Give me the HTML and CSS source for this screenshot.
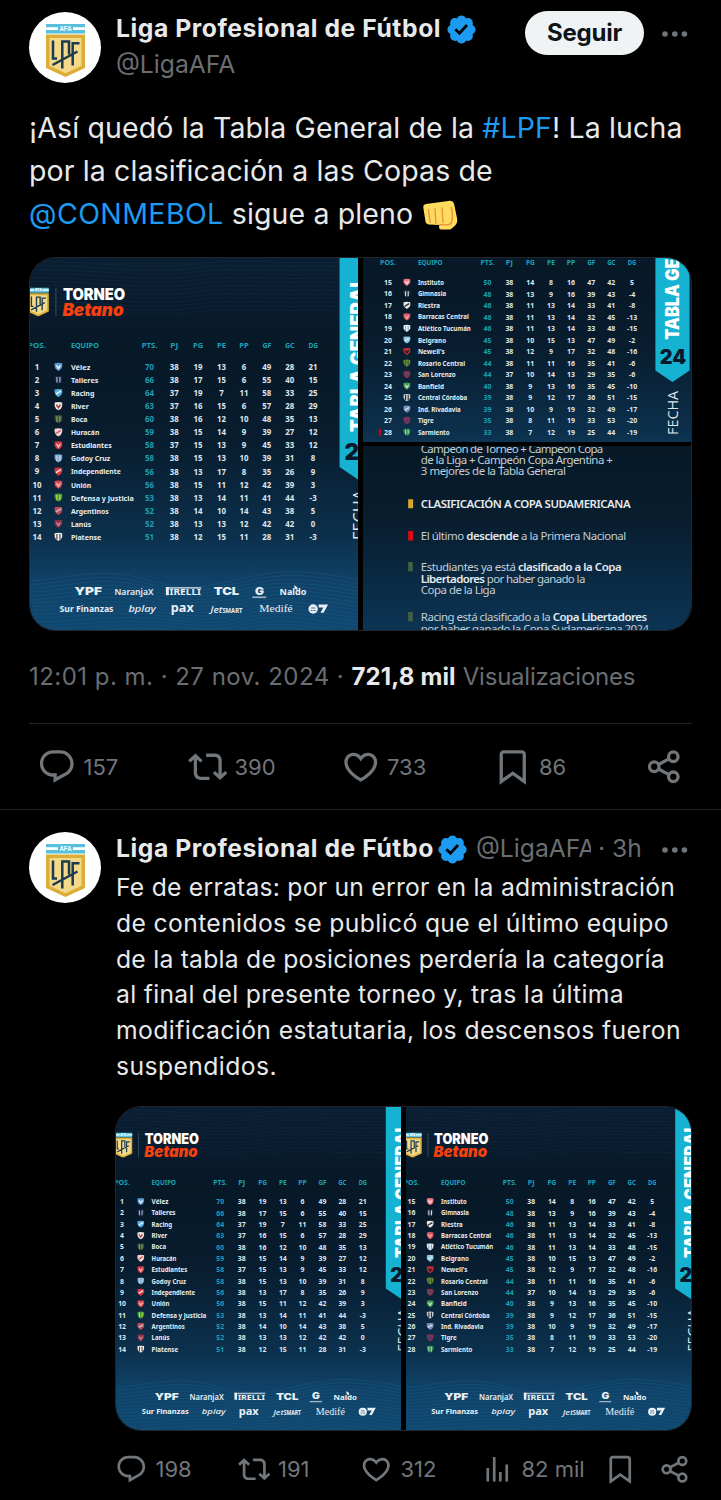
FILE: index.html
```html
<!DOCTYPE html>
<html lang="es">
<head>
<meta charset="utf-8">
<title>Liga Profesional de Fútbol</title>
<link rel="stylesheet" href="styles.css">
</head>
<body>
<svg class="defs" aria-hidden="true">
  <defs>
    <symbol id="i-reply" viewBox="0 0 24 24"><path d="M1.751 10c0-4.42 3.584-8 8.005-8h4.366c4.49 0 8.129 3.64 8.129 8.13 0 2.96-1.607 5.68-4.196 7.11l-8.054 4.46v-3.69h-.067c-4.49.1-8.183-3.51-8.183-8.01zm8.005-6c-3.317 0-6.005 2.69-6.005 6 0 3.37 2.77 6.08 6.138 6.01l.351-.01h1.761v2.3l5.087-2.81c1.951-1.08 3.163-3.13 3.163-5.36 0-3.39-2.744-6.13-6.129-6.13H9.756z"/></symbol>
    <symbol id="i-repost" viewBox="0 0 24 24"><path d="M4.5 3.88l4.432 4.14-1.364 1.46L5.5 7.55V16c0 1.1.896 2 2 2H13v2H7.5c-2.209 0-4-1.79-4-4V7.55L1.432 9.48.068 8.02 4.5 3.88zM16.5 6H11V4h5.5c2.209 0 4 1.79 4 4v8.45l2.068-1.93 1.364 1.46-4.432 4.14-4.432-4.14 1.364-1.46 2.068 1.93V8c0-1.1-.896-2-2-2z"/></symbol>
    <symbol id="i-like" viewBox="0 0 24 24"><path d="M16.697 5.5c-1.222-.06-2.679.51-3.89 2.16l-.805 1.09-.806-1.09C9.984 6.01 8.526 5.44 7.304 5.5c-1.243.07-2.349.78-2.91 1.91-.552 1.12-.633 2.78.479 4.82 1.074 1.97 3.257 4.27 7.129 6.61 3.87-2.34 6.052-4.64 7.126-6.61 1.111-2.04 1.03-3.7.477-4.82-.561-1.13-1.666-1.84-2.908-1.91zm4.187 7.69c-1.351 2.48-4.001 5.12-8.379 7.67l-.503.3-.504-.3c-4.379-2.55-7.029-5.19-8.382-7.67-1.36-2.5-1.41-4.86-.514-6.67.887-1.79 2.647-2.91 4.601-3.01 1.651-.09 3.368.56 4.798 2.01 1.429-1.45 3.146-2.1 4.796-2.01 1.954.1 3.714 1.22 4.601 3.01.896 1.81.846 4.17-.514 6.67z"/></symbol>
    <symbol id="i-save" viewBox="0 0 24 24"><path d="M4 4.5C4 3.12 5.119 2 6.5 2h11C18.881 2 20 3.12 20 4.5v18.44l-8-5.71-8 5.71V4.5zM6.5 4c-.276 0-.5.22-.5.5v14.56l6-4.29 6 4.29V4.5c0-.28-.224-.5-.5-.5h-11z"/></symbol>
    <symbol id="i-views" viewBox="0 0 24 24"><path d="M8.75 21V3h2v18h-2zM18 21V8.5h2V21h-2zM4 21l.004-10h2L6 21H4zm9.248 0v-7h2v7h-2z"/></symbol>
    <symbol id="i-share" viewBox="0 0 24 24"><g fill="none" stroke="currentColor" stroke-width="2"><circle cx="5.6" cy="12" r="2.9"/><circle cx="17.2" cy="5.9" r="2.9"/><circle cx="17.2" cy="18.1" r="2.9"/><path d="M8.2 10.6l6.4-3.4M8.2 13.4l6.4 3.4"/></g></symbol>
    <symbol id="i-more" viewBox="0 0 28 8"><circle cx="4" cy="4" r="2.8"/><circle cx="13.8" cy="4" r="2.8"/><circle cx="23.4" cy="4" r="2.8"/></symbol>
    <symbol id="i-verified" viewBox="0 0 24 24"><path d="M22.25 12c0-1.43-.88-2.67-2.19-3.34.46-1.39.2-2.9-.81-3.91s-2.52-1.27-3.91-.81c-.66-1.31-1.91-2.19-3.34-2.19s-2.67.88-3.33 2.19c-1.4-.46-2.91-.2-3.92.81s-1.26 2.52-.8 3.91c-1.31.67-2.2 1.91-2.2 3.34s.89 2.67 2.2 3.34c-.46 1.39-.21 2.9.8 3.91s2.52 1.26 3.91.81c.67 1.31 1.91 2.19 3.34 2.19s2.68-.88 3.34-2.19c1.39.45 2.9.2 3.91-.81s1.27-2.52.81-3.91c1.31-.67 2.19-1.91 2.19-3.34zm-11.71 4.2L6.8 12.46l1.41-1.42 2.26 2.26 4.8-5.23 1.47 1.36-6.2 6.77z"/></symbol>
    <symbol id="i-fist" viewBox="0 0 36 30">
      <path fill="#ffdb5e" d="M1.3 7.6C1 5.7 2 4.400 3.900 4.100L26.500.9c2.800-.4 4.900.500 5.600 3l3 14.600c.5 3.300-.3 5.500-2.200 7.200l-3.200 2.900c-.7.600-1.300.800-2.200.800H19.300c-1.600 0-2.300-1-2.200-2.500l.1-1.900-10.500-.6c-1.700-.1-2.800-1-3.200-2.800z"/>
      <path fill="none" stroke="#ee9547" stroke-width="1.500" stroke-linecap="round" d="M6.500 9.500l1.600 12.800M13 8.500l.9 15M20 8l1 14.500M29.300 7.500c1.400 4.800 1.500 9.500.3 14.500-.5 2-1.800 2.700-3.600 2.700H17.500"/>
    </symbol>
    <symbol id="i-lpf" viewBox="0 0 39 53">
      <path fill="#58c0dc" d="M0 0h39v9.500H0z"/>
      <path fill="#fff" d="M0 3.300h12v2.600H0zM27 3.300h12v2.600H27z"/>
      <text x="13.500" y="6.900" class="afa" textLength="12" lengthAdjust="spacingAndGlyphs">AFA</text>
      <path fill="#dcae38" d="M0 10.500h39V44L19.500 53 0 44z"/>
      <path fill="#f4d98a" d="M3.500 14h32v27.800l-16 7.400-16-7.400z"/>
      <path fill="none" stroke="#1b3c50" stroke-width="2.500" d="M7 16.500V34.500h4M16.300 44.500V17.500h6.700v13M6.500 41L31.500 27.500M33.500 19.300h-6.800V41.500"/>
    </symbol>
    <linearGradient id="g-board" x1="0" y1="0" x2="0" y2="1">
      <stop offset="0" stop-color="#0b1f33"/><stop offset=".25" stop-color="#071827"/><stop offset=".5" stop-color="#081d2f"/><stop offset=".75" stop-color="#0c304c"/><stop offset=".87" stop-color="#0f4268"/><stop offset="1" stop-color="#104870"/>
    </linearGradient>
    <linearGradient id="g-notes" x1="0" y1="0" x2="0" y2="1">
      <stop offset="0" stop-color="#071927"/><stop offset=".4" stop-color="#081d2e"/><stop offset="1" stop-color="#0c3454"/>
    </linearGradient>
  </defs>
</svg>

<main class="thread">
  <article class="post">
    <header class="head">
      <span class="avatar"><svg><use href="#i-lpf"/></svg></span>
      <div class="who">
        <div class="who-line"><span class="name">Liga Profesional de Fútbol</span><svg class="verified"><use href="#i-verified"/></svg></div>
        <div class="handle">@LigaAFA</div>
      </div>
      <button class="follow">Seguir</button>
      <svg class="more"><use href="#i-more"/></svg>
    </header>
    <p class="text">¡Así quedó la Tabla General de la <a>#LPF</a>! La lucha<br>por la clasificación a las Copas de<br><a class="mention">@CONMEBOL</a> sigue a pleno <svg class="emoji"><use href="#i-fist"/></svg></p>
    <div class="media media-three">
      <svg class="panel tall" data-board="0" viewBox="0 0 329 372" preserveAspectRatio="none"></svg>
      <svg class="panel" data-board="1" data-mark="1" viewBox="-21.3 81.3 372.200 208.700" preserveAspectRatio="none"></svg>
      <svg class="panel" viewBox="0 0 329 184" preserveAspectRatio="none">
        <rect width="329" height="184" fill="url(#g-notes)"/>
        <g class="notes">
          <text x="58" y="6.700" textLength="183">Campeón de Torneo + Campeón Copa</text>
          <text x="58" y="18.200" textLength="192.500">de la Liga + Campeón Copa Argentina +</text>
          <text x="58" y="29.500" textLength="145.500">3 mejores de la Tabla General</text>
          <text x="58" y="62.300" textLength="210.500" class="strong">CLASIFICACIÓN A COPA SUDAMERICANA</text>
          <text x="58" y="94" textLength="206">El último <tspan class="strong">desciende</tspan> a la Primera Nacional</text>
          <text x="58" y="125.500" textLength="201.500">Estudiantes ya está <tspan class="strong">clasificado a la Copa</tspan></text>
          <text x="58" y="137.200" textLength="165"><tspan class="strong">Libertadores</tspan> por haber ganado la</text>
          <text x="58" y="148.500" textLength="75">Copa de la Liga</text>
          <text x="58" y="175.500" textLength="227">Racing está clasificado a la <tspan class="strong">Copa Libertadores</tspan></text>
          <text x="58" y="187" textLength="229">por haber ganado la Copa Sudamericana 2024</text>
        </g>
        <path fill="#d8a62c" d="M45.300 53.300h5v9h-5z"/>
        <path fill="#dc0d12" d="M45.300 85h5v9.500h-5z"/>
        <path fill="#456042" d="M45.300 116h4.600v9.300h-4.600zM45.300 166h4.600v9.300h-4.600z"/>
      </svg>
    </div>
    <div class="meta"><span class="when">12:01 p. m. · 27 nov. 2024 · </span><b>721,8 mil</b><span class="label">Visualizaciones</span></div>
    <div class="actions actions-main">
      <span class="action"><svg><use href="#i-reply"/></svg>157</span>
      <span class="action"><svg><use href="#i-repost"/></svg>390</span>
      <span class="action"><svg><use href="#i-like"/></svg>733</span>
      <span class="action"><svg><use href="#i-save"/></svg>86</span>
      <span class="action"><svg><use href="#i-share"/></svg></span>
    </div>
  </article>

  <article class="post reply">
    <span class="avatar"><svg><use href="#i-lpf"/></svg></span>
    <div class="body">
      <header class="reply-head">
        <span class="name">Liga Profesional de Fútbol</span><svg class="verified"><use href="#i-verified"/></svg><span class="handle">@LigaAFA</span><span class="ago">· 3h</span>
        <svg class="more"><use href="#i-more"/></svg>
      </header>
      <p class="reply-text"><span class="l1">Fe de erratas: por un error en la administración</span><br><span class="l2">de contenidos se publicó que el último equipo</span><br><span class="l1">de la tabla de posiciones perdería la categoría</span><br><span class="l3">al final del presente torneo y, tras la última</span><br><span class="l4">modificación estatutaria, los descensos fueron</span><br><span class="l4">suspendidos.</span></p>
      <div class="media media-two">
        <svg class="panel" data-board="0" viewBox="0 0 328 372" preserveAspectRatio="none"></svg>
        <svg class="panel" data-board="1" viewBox=".7 0 328 372" preserveAspectRatio="none"></svg>
      </div>
      <div class="actions actions-reply">
        <span class="action"><svg><use href="#i-reply"/></svg>198</span>
        <span class="action"><svg><use href="#i-repost"/></svg>191</span>
        <span class="action"><svg><use href="#i-like"/></svg>312</span>
        <span class="action"><svg><use href="#i-views"/></svg>82 mil</span>
        <span class="action"><svg><use href="#i-save"/></svg></span>
        <span class="action"><svg><use href="#i-share"/></svg></span>
      </div>
    </div>
  </article>
</main>
<script src="boards.js"></script>
</body>
</html>
```
FILE: styles.css
```css
* { box-sizing: border-box; }
body {
  margin: 0;
  background: #000;
  color: #e7e9ea;
  font-family: Inter, "Liberation Sans", sans-serif;
}
svg { display: block; flex: none; fill: currentColor; }
.defs { position: absolute; width: 0; height: 0; }
.thread { width: 721px; height: 1500px; overflow: hidden; }
.post { padding: 10px 29px 0; }

/* Account row */
.head { display: flex; height: 96px; }
.avatar {
  flex: none;
  display: flex;
  justify-content: center;
  width: 72px;
  height: 71px;
  padding-top: 12px;
  border-radius: 50%;
  background: #fff;
}
.head .avatar { margin-top: 2px; }
.avatar svg { width: 39px; height: 53px; }
.afa { font: 700 7px "Liberation Sans", sans-serif; fill: #fff; }
.who { margin-left: 15px; width: 409px; }
.who-line { display: flex; align-items: center; height: 36px; }
.name { font-size: 24.7px; font-weight: 700; line-height: 36px; letter-spacing: .56px; white-space: nowrap; }
.verified { width: 33px; height: 33px; margin: 2px 0 0 4px; color: #1d9bf0; }
.handle { font-size: 24.7px; line-height: 36px; color: #6a6e72; white-space: nowrap; }
.follow {
  width: 119px;
  height: 44px;
  margin-top: 1px;
  padding: 0;
  border: 0;
  border-radius: 22px;
  background: #eff3f4;
  color: #0f1419;
  font: 700 24px/42px Inter, sans-serif;
  letter-spacing: -.23px;
}
.more { width: 28px; height: 8px; color: #71767b; }
.head .more { margin: 20px 0 0 17px; }

/* Main post text */
.text { margin: 0; font-size: 28.5px; line-height: 43px; letter-spacing: .13px; white-space: nowrap; }
.text a { color: #1d9bf0; }
.text .mention { letter-spacing: .4px; }
.emoji { display: inline-block; width: 36px; height: 30px; margin-left: 1px; vertical-align: -6px; }

/* Media grids */
.media { display: grid; overflow: hidden; border: 1px solid #20262c; background: #000; }
.panel { width: 100%; height: 100%; }
.media-three {
  width: 663px;
  height: 374px;
  margin-top: 22px;
  border-radius: 26px;
  grid-template: 184px 184px / 328px 328px;
  gap: 4px 5px;
}
.tall { grid-row: 1 / 3; }
.media-two {
  width: 577px;
  height: 325px;
  margin-top: 21px;
  border-radius: 26px;
  grid-template: 323px / 285px 285px;
  gap: 5px;
}

/* Date and views */
.meta {
  height: 62px;
  margin-top: 31px;
  border-bottom: 1px solid #222629;
  font-size: 24px;
  line-height: 30px;
  color: #6a6e72;
  white-space: pre;
}
.when { letter-spacing: .47px; }
.meta b { color: #e7e9ea; letter-spacing: .15px; }
.label { margin-left: 7px; letter-spacing: -.22px; }

/* Action bars */
.actions { display: grid; align-items: center; font-size: 22px; color: #71767b; }
.action { display: flex; align-items: center; white-space: nowrap; letter-spacing: 0; }
.actions-main { height: 85px; padding-left: 8px; grid-template-columns: 151px 152.500px 152px 152px 40px; }
.actions-main svg { width: 39.500px; height: 39.500px; margin-right: 7px; }
.actions-reply { width: 590px; height: 76px; grid-template-columns: 122.500px 122.500px 121px 123px 55px 40px; }
.actions-reply svg { width: 32.500px; height: 32.500px; margin-right: 8px; }

/* Second post */
.reply { display: flex; margin: 0 -1px; padding: 20px 30px 0; border-top: 1px solid #222629; }
.reply .avatar { margin-top: 2px; }
.body { margin-left: 14px; }
.reply-head { display: flex; align-items: center; height: 36px; margin-bottom: 4px; }
.reply-head .name { width: 317px; margin-left: 1px; overflow: hidden; }
.reply-head .verified { margin-left: 3px; }
.reply-head .handle { width: 115px; margin-left: 7px; overflow: hidden; }
.reply-head .ago { width: 60px; margin-left: 7px; font-size: 24.7px; color: #6a6e72; }
.reply-head .more { margin-left: 3px; margin-top: 3px; }
.reply-text { margin: 0 0 0 1px; font-size: 24.7px; line-height: 35.800px; white-space: nowrap; }
.l1 { letter-spacing: .24px; }
.l2 { letter-spacing: .37px; }
.l3 { letter-spacing: .31px; }
.l4 { letter-spacing: .42px; }

/* Standings boards */
.panel text { font-family: "Noto Sans", "Open Sans", sans-serif; }
.panel .col { font-size: 7px; font-weight: 700; fill: #1ba3ba; text-anchor: middle; }
.panel .team { font-size: 7.500px; font-weight: 700; fill: #e6edf2; }
.panel .num { font-size: 7.900px; font-weight: 700; fill: #dfe7ec; text-anchor: middle; }
.panel .pts { fill: #1c9fb6; }
.panel .torneo { font: 900 16px Inter, sans-serif; fill: #fff; }
.panel .betano { font: italic 900 17.500px Inter, sans-serif; fill: #f5400f; }
.panel .title { font: 900 21px Inter, sans-serif; fill: #fff; }
.panel .round { font: 900 22.500px Inter, sans-serif; fill: #07192a; text-anchor: middle; }
.panel .fecha { font: 400 17px "Open Sans", sans-serif; fill: #dfe6ea; }
.panel .ad { font-size: 9px; font-weight: 700; fill: #e9f0f5; }
.panel .wide { font: 900 10.500px Inter, sans-serif; }
.panel .light { font-size: 9.500px; font-weight: 600; }
.panel .slant { font-style: italic; font-weight: 500; }
.panel .serif { font: 400 11px "Liberation Serif", serif; }
.panel .small { font-size: 7px; }
.panel .large { font-size: 13px; }
.panel .notes text { font-size: 11.500px; fill: #c3ced6; }
.panel .notes .strong { font-weight: 600; fill: #e4eaee; }
```
FILE: boards.js
```js
// Each team: name, drawn width, crest colours, then PTS PJ PG PE PP GF GC DG.
const boards = [
  { first: 1, teams: [
    ["Vélez", 19.5, "#5b9bd0", "#e8f1f8", [70, 38, 19, 13, 6, 49, 28, 21]],
    ["Talleres", 27.5, "#1c2a48", "#aab4c8", [66, 38, 17, 15, 6, 55, 40, 15]],
    ["Racing", 23.5, "#4fb1e6", "#f2f8fc", [64, 37, 19, 7, 11, 58, 33, 25]],
    ["River", 18, "#e9e4e4", "#b8343c", [63, 37, 16, 15, 6, 57, 28, 29]],
    ["Boca", 16.5, "#34533f", "#9a9a50", [60, 38, 16, 12, 10, 48, 35, 13]],
    ["Huracán", 28.5, "#f3d6d8", "#d4606a", [59, 38, 15, 14, 9, 39, 27, 12]],
    ["Estudiantes", 41, "#d43a44", "#f5c3c5", [58, 37, 15, 13, 9, 45, 33, 12]],
    ["Godoy Cruz", 39.5, "#7aa6d0", "#c5d9ea", [58, 38, 15, 13, 10, 39, 31, 8]],
    ["Independiente", 50, "#d93540", "#f3e9e9", [56, 38, 13, 17, 8, 35, 26, 9]],
    ["Unión", 20.5, "#d94a54", "#f3b8bb", [56, 38, 15, 11, 12, 42, 39, 3]],
    ["Defensa y Justicia", 63, "#3f9a3c", "#d8d534", [53, 38, 13, 14, 11, 41, 44, -3]],
    ["Argentinos", 38, "#c04a58", "#b9bccb", [52, 38, 14, 10, 14, 43, 38, 5]],
    ["Lanús", 20.5, "#8a2f48", "#c98a98", [52, 38, 13, 13, 12, 42, 42, 0]],
    ["Platense", 30.5, "#f0efec", "#59453c", [51, 38, 12, 15, 11, 28, 31, -3]]
  ] },
  { first: 15, teams: [
    ["Instituto", 29.5, "#f0787e", "#f9dada", [50, 38, 14, 8, 16, 47, 42, 5]],
    ["Gimnasia", 32, "#26323f", "#d9dfe3", [48, 38, 13, 9, 16, 39, 43, -4]],
    ["Riestra", 25, "#e8eaea", "#2b3036", [46, 38, 11, 13, 14, 33, 41, -8]],
    ["Barracas Central", 57.7, "#dd5a62", "#f4a9ab", [46, 38, 11, 13, 14, 32, 45, -13]],
    ["Atlético Tucumán", 60, "#e8f1f8", "#6faedb", [46, 38, 11, 13, 14, 33, 48, -15]],
    ["Belgrano", 32, "#8fc8e0", "#cfe8f1", [45, 38, 10, 15, 13, 47, 49, -2]],
    ["Newell's", 30.5, "#c62f38", "#161b22", [45, 38, 12, 9, 17, 32, 48, -16]],
    ["Rosario Central", 53.5, "#6d8a30", "#2a5a48", [44, 38, 11, 11, 16, 35, 41, -6]],
    ["San Lorenzo", 43, "#8c3048", "#3c5480", [44, 37, 10, 14, 13, 29, 35, -6]],
    ["Banfield", 29.5, "#3f9a54", "#cfe6c8", [40, 38, 9, 13, 16, 35, 45, -10]],
    ["Central Córdoba", 56, "#c9cdd2", "#24282e", [39, 38, 9, 12, 17, 36, 51, -15]],
    ["Ind. Rivadavia", 48.6, "#7d90bd", "#d3dcec", [39, 38, 10, 9, 19, 32, 49, -17]],
    ["Tigre", 18, "#8a3150", "#33427c", [35, 38, 8, 11, 19, 33, 53, -20]],
    ["Sarmiento", 36, "#2f8c50", "#a6d5b0", [33, 38, 7, 12, 19, 25, 44, -19]]
  ] }
];

const columns = [["POS.", 7, 18], ["EQUIPO", 55, 28], ["PTS.", 120, 16], ["PJ", 144.8, 8], ["PG", 168.6, 10],
  ["PE", 192, 9], ["PP", 214.6, 9.5], ["GF", 237.6, 9], ["GC", 260.5, 9.5], ["DG", 284, 9.5]];

function stretched(cls, x, y, width, text, extra = "") {
  return `<text class="${cls}" x="${x}" y="${y}" textLength="${width}" lengthAdjust="spacingAndGlyphs" ${extra}>${text}</text>`;
}

// Soft contour lines, densest near the foot of the board.
function waves() {
  let out = "";
  for (let i = 0; i < 17; i++) {
    const y = 322 + i * 3.6;
    const a = Math.max(10 - i * 0.7, 1);
    out += `<path d="M-22 ${y}C20 ${y + 6} 60 ${y - a * 1.6} 110 ${y - 2}S170 ${y + 8} 215 ${y - 2}S280 ${y - a} 351 ${y + 4}" stroke="#3d86b4" stroke-opacity="${0.3 - i * 0.008}" stroke-width=".6"/>`;
  }
  for (let i = 0; i < 13; i++) {
    const y = 4 + i * 4;
    out += `<path d="M-22 ${y}C60 ${y - 3} 110 ${y + 9} 165 ${y + 2}S260 ${y + 5} 351 ${y - 2}" stroke="#2a5c86" stroke-opacity=".22" stroke-width=".6"/>`;
  }
  return `<g fill="none">${out}</g>`;
}

function crest(y, base, accent, i) {
  const detail = i % 3 === 0 ? `<path d="M26.500 ${y - 1.500}l2 3 2-3" fill="none" stroke="${accent}" stroke-width="1.400"/>`
    : i % 3 === 1 ? `<path d="M27 ${y - 3}v5.500M30 ${y - 3}v5.500" stroke="${accent}" stroke-width="1.200"/>`
    : `<path d="M26 ${y + 1}l5-3" stroke="${accent}" stroke-width="1.600"/>`;
  return `<path d="M24.700 ${y - 3.700}q3.800-1 7.600 0v3.400q-.5 2.900-3.800 4.300q-3.300-1.400-3.800-4.300z" fill="${base}"/>${detail}`;
}

function sponsors() {
  return stretched("ad wide", 44.7, 337.3, 27.5, "YPF")
    + stretched("ad light", 84.7, 337, 39.3, "NaranjaX")
    + `<path d="M136.300 329h35.500v1.800h-35.500z" fill="#a9bccb"/><path d="M136.300 329h3v8.200h-3z" fill="#e9f0f5"/>`
    + stretched("ad", 140, 337.2, 31.5, "IRELLI")
    + stretched("ad wide", 184.3, 337.2, 25.5, "TCL")
    + stretched("ad wide", 225.7, 336.7, 9, "G") + `<path d="M223 338.500h14v1.600h-14z" fill="#9fb4c4"/>`
    + stretched("ad", 250.3, 337.3, 27, "Naldo") + `<path d="M265 327l3 2.200.5 3-3-1.500z" fill="#e9f0f5"/>`
    + stretched("ad", 29.7, 354, 54, "Sur Finanzas")
    + stretched("ad slant", 98.7, 354, 27.5, "bplay")
    + stretched("ad large", 141.3, 354.3, 23, "pax")
    + stretched("ad slant", 181, 354.8, 12, "Jet") + stretched("ad small", 193, 354.8, 20, "SMART")
    + stretched("ad serif", 230, 354.5, 33.5, "Medifé")
    + `<circle cx="284" cy="351" r="4.700" fill="#e9f0f5"/><path d="M281.500 352.500h2M282 350h4M284.500 352.500h2" stroke="#14456a" stroke-width=".8"/><path d="M289.500 346.500h9.500l-4.500 8.300h-3.200l3-5.400h-4.800z" fill="#e9f0f5"/>`;
}

function drawBoard(svg) {
  const board = boards[svg.dataset.board];
  let out = `<rect x="-24" width="400" height="372" fill="url(#g-board)"/>` + waves();
  out += `<use href="#i-lpf" x="-2.500" y="29.500" width="21.500" height="29"/><path d="M26 30v28" stroke="#45586a" stroke-width=".8"/>`;
  out += stretched("torneo", 33, 42.4, 62.5, "TORNEO") + stretched("betano", 32.5, 57.8, 61.5, "Betano");
  for (const [label, x, w] of columns) out += stretched("col", x, 89.8, w, label);
  board.teams.forEach(([name, width, base, accent, stats], i) => {
    const y = 109 + i * 13.08;
    out += `<text class="num" x="7" y="${y + 2.8}">${board.first + i}</text>` + crest(y, base, accent, i)
      + stretched("team", 41, y + 2.8, width, name);
    stats.forEach((value, c) => {
      out += `<text class="num${c ? "" : " pts"}" x="${columns[c + 2][1]}" y="${y + 2.9}">${value}</text>`;
    });
  });
  if (svg.dataset.mark) out += `<path d="M-3.500 275h3v8h-3z" fill="#a5101c"/>`;
  out += `<path d="M310.500 0h38.800v209l-19.400 13-19.400-13z" fill="#16b2d2"/>`;
  out += stretched("title", 0, 0, 155, "TABLA GENERAL", 'transform="translate(337 174) rotate(-90)"');
  out += stretched("round", 330.5, 202, 30, "24");
  out += stretched("fecha", 0, 0, 50, "FECHA", 'transform="translate(336.500 282) rotate(-90)"');
  svg.innerHTML = out + sponsors();
}

document.querySelectorAll("[data-board]").forEach(drawBoard);
```
